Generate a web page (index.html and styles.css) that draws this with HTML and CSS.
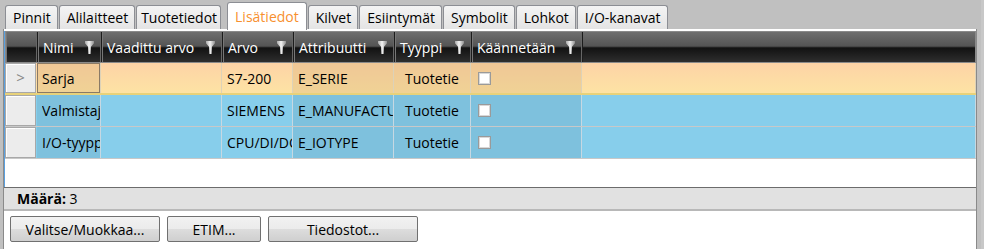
FILE: index.html
```html
<!DOCTYPE html>
<html lang="fi">
<head>
  <meta charset="UTF-8">
  <title>Lisätiedot</title>
  <link rel="stylesheet" href="styles.css">
</head>
<body>
  <div class="window">
    <div class="tabs">
      <div class="tab">Pinnit</div>
      <div class="tab">Alilaitteet</div>
      <div class="tab narrow">Tuotetiedot</div>
      <div class="tab active">Lisätiedot</div>
      <div class="tab">Kilvet</div>
      <div class="tab">Esiintymät</div>
      <div class="tab">Symbolit</div>
      <div class="tab">Lohkot</div>
      <div class="tab">I/O-kanavat</div>
    </div>

    <div class="panel">
      <div class="grid">
        <div class="grid-head">
          <div class="hcell"></div>
          <div class="hcell">Nimi <span class="filter"></span></div>
          <div class="hcell">Vaadittu arvo <span class="filter"></span></div>
          <div class="hcell">Arvo <span class="filter"></span></div>
          <div class="hcell">Attribuutti <span class="filter"></span></div>
          <div class="hcell">Tyyppi <span class="filter"></span></div>
          <div class="hcell">Käännetään <span class="filter"></span></div>
          <div class="hcell last"></div>
        </div>

        <div class="grid-row current">
          <div class="rh">&gt;</div>
          <div class="cell ro focus">Sarja</div>
          <div class="cell"></div>
          <div class="cell">S7-200</div>
          <div class="cell ro">E_SERIE</div>
          <div class="cell ro type">Tuotetie</div>
          <div class="cell ro"><span class="check"></span></div>
          <div class="cell"></div>
        </div>
        <div class="grid-row">
          <div class="rh"></div>
          <div class="cell ro"><span class="clip">Valmistaja</span></div>
          <div class="cell"></div>
          <div class="cell"><span class="clip">SIEMENS</span></div>
          <div class="cell ro"><span class="clip">E_MANUFACTURER</span></div>
          <div class="cell ro type">Tuotetie</div>
          <div class="cell ro"><span class="check"></span></div>
          <div class="cell"></div>
        </div>
        <div class="grid-row">
          <div class="rh"></div>
          <div class="cell ro"><span class="clip">I/O-tyyppi</span></div>
          <div class="cell"></div>
          <div class="cell"><span class="clip">CPU/DI/DO</span></div>
          <div class="cell ro">E_IOTYPE</div>
          <div class="cell ro type">Tuotetie</div>
          <div class="cell ro"><span class="check"></span></div>
          <div class="cell"></div>
        </div>
        <div class="grid-empty"></div>
      </div>

      <div class="status"><b>Määrä:</b> 3</div>

      <div class="buttons">
        <button class="btn wide">Valitse/Muokkaa...</button>
        <button class="btn">ETIM...</button>
        <button class="btn wide">Tiedostot...</button>
      </div>
    </div>
  </div>
</body>
</html>
```

FILE: styles.css
```css
/* perus */
html, body { margin: 0; padding: 0; }
body {
  width: 984px;
  height: 249px;
  overflow: hidden;
  background: #c0c0c0;
  font-family: "Segoe UI", "Open Sans", sans-serif;
  font-size: 14px;
  color: #000;
}

.window {
  display: flex;
  flex-direction: column;
  height: 249px;
  padding-right: 4px;
  border-right: 3px solid #c8c8c8;
  box-sizing: border-box;
}

/* välilehdet */
.tabs {
  display: flex;
  align-items: flex-end;
  height: 29px;
  padding-left: 5px;
}
.tab {
  height: 24px;
  line-height: 23px;
  padding: 0 6px 0 7px;
  margin-right: 1px;
  border: 1px solid #8c8e94;
  border-bottom: none;
  border-radius: 3px 3px 0 0;
  background: linear-gradient(#f4f4f4, #e4e4e4);
  box-sizing: border-box;
  white-space: nowrap;
}
.tab.narrow { padding: 0 3px 0 4px; }
.tab.active {
  height: 28px;
  line-height: 27px;
  margin: 0 1px 0 5px;
  padding: 0 7px;
  background: #fff;
  color: #f7902f;
  position: relative;
  top: 1px;
}

/* paneeli */
.panel {
  flex: 1;
  display: flex;
  flex-direction: column;
  margin-left: 3px;
  border-left: 1px solid #8a8a8a;
  border-right: 1px solid #8a8a8a;
  background: #fff;
}

.grid {
  border-left: 1px solid #5aa0e0;
  margin-top: 2px;
}
.grid-head, .grid-row {
  display: grid;
  grid-template-columns: 32px 64px 121px 71px 101px 77px 111px 1fr;
}

.grid-head {
  height: 30px;
  border: 1px solid #8a8a8a;
  background: linear-gradient(#6f6f6f 0%, #545454 47%, #121212 53%, #2e2e2e 100%);
}
.hcell {
  display: flex;
  align-items: center;
  justify-content: space-between;
  padding: 1px 7px 0 5px;
  color: #fff;
  border-right: 1px solid #1c1c1c;
  box-shadow: inset 1px 0 #777, inset -1px 0 #666;
  white-space: nowrap;
  overflow: hidden;
}
.hcell.last { border-right: none; box-shadow: none; }

.filter {
  flex: none;
  width: 9px;
  height: 13px;
  background: linear-gradient(90deg, #a8a8a8, #f4f4f4 45%, #8e8e8e);
  clip-path: polygon(0 0, 100% 0, 100% 18%, 66% 45%, 62% 100%, 38% 100%, 34% 45%, 0 18%);
}

/* rivit */
.grid-row {
  height: 31px;
  background: #87ceeb;
  border-bottom: 1px solid #c8c8c8;
}
.grid-row.current {
  background: linear-gradient(#fdd3a6, #fde3a4);
  border-bottom: 2px solid #e8d27a;
  height: 30px;
}
.rh {
  margin-right: 1px;
  background: #ececec;
  border: 1px solid #a8a8a8;
  box-shadow: inset 1px 1px #fff;
  color: #888;
  font-size: 15px;
  text-align: center;
  line-height: 27px;
}
.cell {
  display: flex;
  align-items: center;
  padding: 0 0 0 5px;
  border-right: 1px solid #c6d8e2;
  white-space: nowrap;
  overflow: hidden;
  min-width: 0;
}
.clip {
  display: block;
  overflow: hidden;
  min-width: 0;
}
.cell.ro { background: #7ec1dd; }
.current .cell { border-right-color: #ddd2b8; }
.current .cell.ro { background: rgba(210, 170, 110, 0.28); }
.cell.focus { box-shadow: inset 0 0 0 1px #8a7a66; }
.cell.type { padding-left: 11px; }

.check {
  width: 11px;
  height: 11px;
  margin-left: 2px;
  border: 1px solid #9a9a9a;
  background: #fff;
  box-shadow: inset 0 0 0 1px #d8d8d8;
}

.grid-empty { height: 28px; }

/* tila */
.status {
  height: 21px;
  line-height: 21px;
  padding-left: 13px;
  background: #e1e1e1;
  border-top: 1px solid #6c6c6c;
  border-bottom: 2px solid #b8b8b8;
}

/* painikkeet */
.buttons {
  display: flex;
  gap: 7px;
  padding: 5px 0 0 6px;
}
.btn {
  height: 26px;
  width: 94px;
  border: 1px solid #707070;
  border-radius: 2px;
  background: linear-gradient(#f2f2f2 0%, #ebebeb 50%, #dddddd 50%, #cfcfcf 100%);
  font-family: inherit;
  font-size: 14px;
  color: #000;
  padding: 0;
}
.btn.wide { width: 150px; }
```
